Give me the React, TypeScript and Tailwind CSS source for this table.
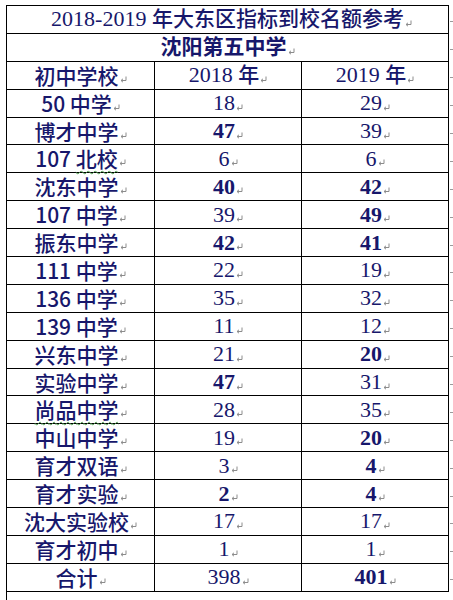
import React from "react";

const Mark = ({ cls = "" }: { cls?: string }) => (
  <svg width="7" height="7" viewBox="0 0 7 7" className={"shrink-0 " + cls}>
    <path d="M6 0.5 V4.5 H1.2" stroke="#8c8c8c" strokeWidth="1" fill="none" />
    <path d="M3 2.8 L1 4.5 L3 6.2" stroke="#8c8c8c" strokeWidth="1" fill="none" />
  </svg>
);

type Row = { name: React.ReactNode; a: string; b: string; ab?: boolean; bb?: boolean };

const serif = "[font-family:'Liberation_Serif','Noto_Sans_CJK_SC',serif]";
const sans = "[font-family:'Noto_Sans_CJK_SC',sans-serif]";
const wavy = "underline decoration-wavy decoration-[#4f9e4f] decoration-1 underline-offset-[3px]";

const rows: Row[] = [
  { name: "50 中学", a: "18", b: "29" },
  { name: "博才中学", a: "47", b: "39", ab: true },
  { name: <>107 <span className={wavy}>北校</span></>, a: "6", b: "6" },
  { name: "沈东中学", a: "40", b: "42", ab: true, bb: true },
  { name: "107 中学", a: "39", b: "49", bb: true },
  { name: "振东中学", a: "42", b: "41", ab: true, bb: true },
  { name: "111 中学", a: "22", b: "19" },
  { name: "136 中学", a: "35", b: "32" },
  { name: "139 中学", a: "11", b: "12" },
  { name: "兴东中学", a: "21", b: "20", bb: true },
  { name: "实验中学", a: "47", b: "31", ab: true },
  { name: <span className={wavy}>尚品中学</span>, a: "28", b: "35" },
  { name: "中山中学", a: "19", b: "20", bb: true },
  { name: "育才双语", a: "3", b: "4", bb: true },
  { name: "育才实验", a: "2", b: "4", ab: true, bb: true },
  { name: "沈大实验校", a: "17", b: "17" },
  { name: "育才初中", a: "1", b: "1" },
  { name: "合计", a: "398", b: "401", bb: true },
];

const Cell = ({ children, cls = "" }: { children: React.ReactNode; cls?: string }) => (
  <div className="flex items-center justify-center border-r border-black h-full">
    <span className={"flex items-center " + cls}>
      <span className="leading-none">{children}</span>
      <Mark cls="ml-[1px] translate-y-[4px]" />
    </span>
  </div>
);

export default function App() {
  const total = 21;
  return (
    <div className={"w-[453px] h-[600px] bg-white pl-[6px] pt-[5px] flex " + serif}>
      <div className="w-[443px] border-l border-t border-black text-[#17176b] text-[21px]">
        <div className="h-[27.9px] border-b border-r border-black flex items-center justify-center pl-[8px]">
          <span className="flex items-center font-medium">
            <span className="leading-none">
              <span className="text-[22px] font-normal">2018-2019 </span>年大东区指标到校名额参考
            </span>
            <Mark cls="ml-[1px] translate-y-[4px]" />
          </span>
        </div>
        <div className="h-[27.9px] border-b border-r border-black flex items-center justify-center">
          <span className="flex items-center font-bold">
            <span className="leading-none">沈阳第五中学</span>
            <Mark cls="ml-[1px] translate-y-[4px]" />
          </span>
        </div>
        <div className="h-[27.9px] border-b border-black grid grid-cols-[148px_147px_147px]">
          <Cell cls={"font-medium " + sans}>初中学校</Cell>
          <Cell cls="font-medium">
            <span className="text-[22px] font-normal">2018 </span>年
          </Cell>
          <Cell cls="font-medium">
            <span className="text-[22px] font-normal">2019 </span>年
          </Cell>
        </div>
        {rows.map((r, i) => (
          <div key={i} className="h-[27.9px] border-b border-black grid grid-cols-[148px_147px_147px]">
            <Cell cls={"font-medium " + sans}>{r.name}</Cell>
            <Cell cls={"text-[22px] " + (r.ab ? "font-bold" : "font-normal")}>{r.a}</Cell>
            <Cell cls={"text-[22px] " + (r.bb ? "font-bold" : "font-normal")}>{r.b}</Cell>
          </div>
        ))}
      </div>
      <div className="flex flex-col pl-[1px]">
        {Array.from({ length: total }).map((_, i) => (
          <div key={i} className="h-[27.9px] flex items-center">
            <svg width="3" height="5" viewBox="0 0 3 5" className="translate-y-[3px]">
              <path d="M0 2.5 H3" stroke="#9a9a9a" strokeWidth="1" />
            </svg>
          </div>
        ))}
      </div>
    </div>
  );
}
